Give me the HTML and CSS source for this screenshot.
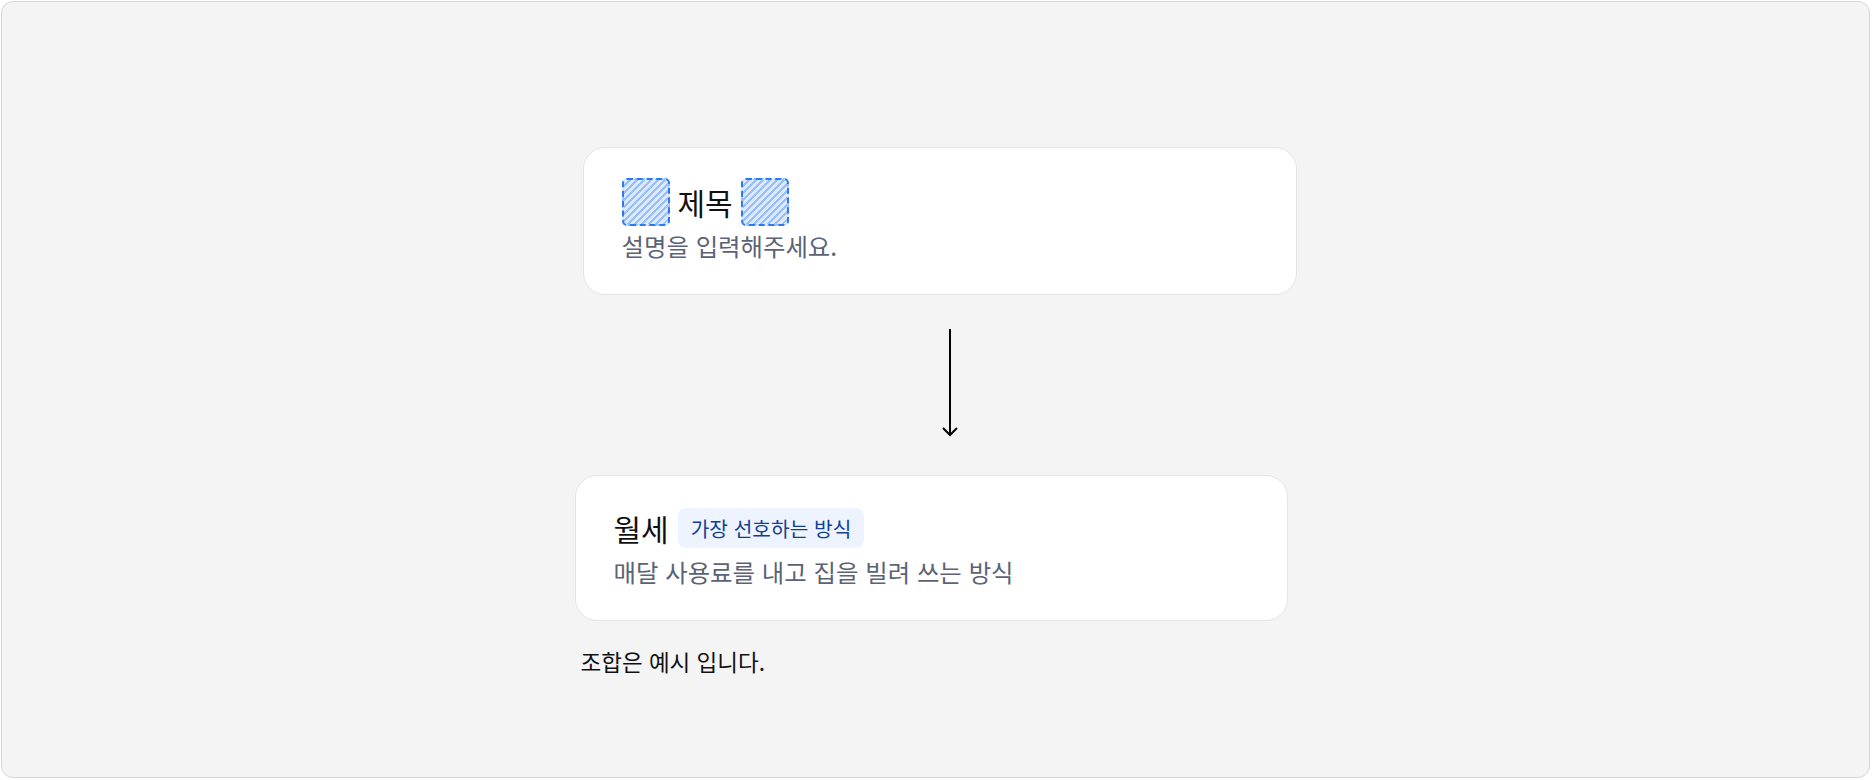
FILE: index.html
```html
<!DOCTYPE html>
<html lang="ko">
<head>
<meta charset="utf-8">
<title>조합 예시</title>
<link rel="stylesheet" href="styles.css">
</head>
<body>
<div class="frame">
  <div class="column">
    <div class="card card-template">
      <div class="title-row">
        <span class="slot"></span>
        <span class="title">제목</span>
        <span class="slot"></span>
      </div>
      <p class="desc">설명을 입력해주세요.</p>
    </div>

    <svg class="arrow" width="20" height="108" viewBox="0 0 20 108" aria-hidden="true">
      <line x1="10" y1="0" x2="10" y2="106" stroke="#000" stroke-width="2"/>
      <polyline points="3,99 10,106 17,99" fill="none" stroke="#000" stroke-width="2"/>
    </svg>

    <div class="card card-example">
      <div class="title-row">
        <span class="title">월세</span>
        <span class="badge">가장 선호하는 방식</span>
      </div>
      <p class="desc">매달 사용료를 내고 집을 빌려 쓰는 방식</p>
    </div>

    <p class="caption">조합은 예시 입니다.</p>
  </div>
</div>
</body>
</html>
```

FILE: styles.css
```css
* { box-sizing: border-box; }

html, body {
  margin: 0;
  padding: 0;
  background: #ffffff;
}

body {
  font-family: "Noto Sans CJK KR", "Noto Sans", sans-serif;
  color: #111111;
}

.frame {
  margin: 1px 2px 0 1px;
  height: 777px;
  border: 1px solid #d6d6d6;
  border-radius: 12px;
  background: #f4f4f4;
  padding-top: 145px;
  display: flex;
  justify-content: center;
}

.column {
  width: 722px;
  display: flex;
  flex-direction: column;
  align-items: flex-start;
}

.card {
  background: #ffffff;
  border: 1px solid #e4e4e4;
  border-radius: 22px;
  padding: 30px 38px 31px;
  display: flex;
  flex-direction: column;
  gap: 3px;
}

.card-template {
  width: 714px;
  margin-left: 8px;
}

.card-example {
  width: 713px;
  margin-top: 38px;
  padding-top: 31px;
  gap: 6px;
}

.title-row {
  display: flex;
  align-items: center;
  gap: 8px;
}

.title {
  font-size: 30px;
  line-height: 42px;
  color: #111111;
}

.slot {
  width: 48px;
  height: 48px;
  border: 2px dashed #2a7af3;
  border-radius: 5px;
  background: repeating-linear-gradient(135deg, #dce9ff 0 3px, #97bffc 3px 5px);
}

.desc {
  margin: 0;
  font-size: 24.4px;
  line-height: 34px;
  color: #5b6376;
}

.badge {
  background: #edf4ff;
  color: #123f91;
  font-size: 20.3px;
  line-height: 40px;
  height: 40px;
  padding: 0 13px;
  border-radius: 8px;
  margin-left: 1px;
}

.arrow {
  display: block;
  margin-top: 34px;
  margin-left: 365px;
}

.caption {
  margin: 24px 0 0 6px;
  font-size: 22.5px;
  line-height: 32px;
  color: #111111;
}
```
